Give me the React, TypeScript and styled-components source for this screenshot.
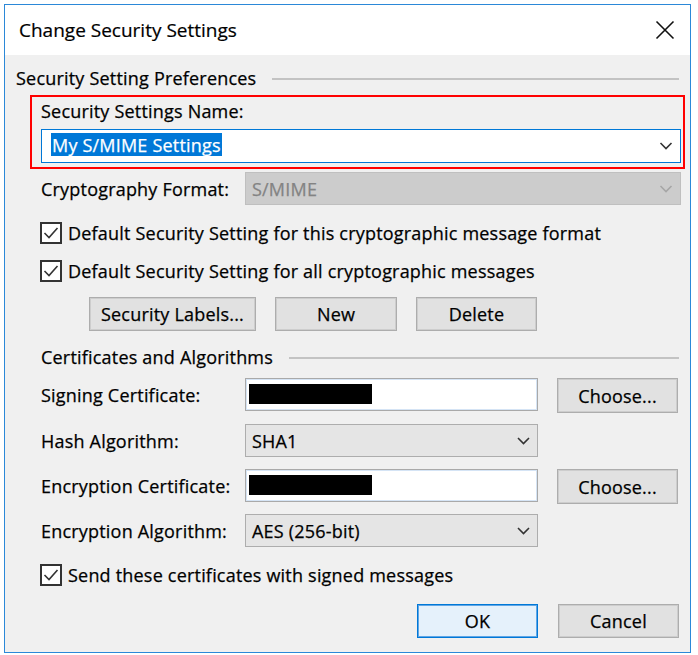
import React from "react";
import styled, { createGlobalStyle } from "styled-components";

const GlobalStyle = createGlobalStyle`
  html, body { margin: 0; padding: 0; background: #ffffff; }
  body { font-family: "Open Sans", "Noto Sans", sans-serif; color: #000; }
  * { box-sizing: border-box; }
`;

const Page = styled.div`
  width: 698px;
  height: 655px;
  padding: 4px 0 0 4px;
`;

const Window = styled.div`
  width: 687px;
  height: 649px;
  border: 1px solid #2b88d8;
  background: #f0f0f0;
  display: flex;
  flex-direction: column;
`;

const TitleBar = styled.div`
  height: 50px;
  flex: none;
  background: #ffffff;
  display: flex;
  align-items: center;
  justify-content: space-between;
  padding: 0 15px 0 14px;
`;

const Title = styled.span`
  font-size: 19px;
  letter-spacing: 0;
  color: #000;
  -webkit-text-stroke: 0.2px #000;
`;

const Body = styled.div`
  flex: 1;
  padding: 12px 11px 0 11px;
  display: flex;
  flex-direction: column;
  font-size: 18px;
  letter-spacing: 0.2px;
  color: #000;
  -webkit-text-stroke: 0.25px currentColor;
`;

const SectionHeader = styled.div<{ $indent?: number; $mt?: number }>`
  height: 22px;
  margin-top: ${(p) => p.$mt ?? 0}px;
  padding-left: ${(p) => p.$indent ?? 0}px;
  display: flex;
  align-items: center;
  gap: 16px;
  white-space: nowrap;
`;

const Rule = styled.div`
  flex: 1;
  height: 2px;
  background: #c3c3c3;
  margin-top: 2px;
`;

const Highlight = styled.div`
  margin: 6px -6px 0 14px;
  border: 2px solid #ff0000;
  padding: 3px 2px 4px 9px;
`;

const Label = styled.div`
  height: 22px;
  display: flex;
  align-items: center;
  white-space: nowrap;
`;

const NameInput = styled.div`
  margin-top: 7px;
  height: 34px;
  border: 1px solid #0078d7;
  background: #fff;
  display: flex;
  align-items: center;
  justify-content: space-between;
  padding: 0 7px 0 9px;
`;

const Selected = styled.span`
  background: #0078d7;
  color: #fff;
  height: 23px;
  display: flex;
  align-items: center;
  padding: 0 1px;
  margin-top: -3px;
`;

const Indent = styled.div`
  padding-left: 25px;
  display: flex;
  flex-direction: column;
`;

const FieldRow = styled.div<{ $mt: number; $h: number }>`
  margin-top: ${(p) => p.$mt}px;
  height: ${(p) => p.$h}px;
  display: flex;
  align-items: flex-start;
`;

const FieldLabel = styled.div<{ $h: number }>`
  width: 204px;
  flex: none;
  height: ${(p) => p.$h}px;
  display: flex;
  align-items: center;
  white-space: nowrap;
`;

const Dropdown = styled.div<{ $w?: number; $disabled?: boolean; $h: number }>`
  width: ${(p) => (p.$w ? `${p.$w}px` : "auto")};
  flex: ${(p) => (p.$w ? "none" : "1")};
  margin-right: ${(p) => (p.$w ? 0 : -2)}px;
  height: ${(p) => p.$h}px;
  background: ${(p) => (p.$disabled ? "#cccccc" : "#e5e5e5")};
  border: 1px solid ${(p) => (p.$disabled ? "#bfbfbf" : "#adadad")};
  color: ${(p) => (p.$disabled ? "#838383" : "#000")};
  display: flex;
  align-items: center;
  justify-content: space-between;
  padding: 0 7px 0 6px;
`;

const TextBox = styled.div`
  width: 293px;
  height: 33px;
  flex: none;
  background: #fff;
  border: 1px solid #a9a9a9;
  box-shadow: inset 0 0 0 1px #d5e4f5;
  padding: 5px 3px;
  display: flex;
`;

const Redacted = styled.div`
  width: 123px;
  height: 20px;
  background: #000;
`;

const Button = styled.div<{ $w: number; $primary?: boolean; $h?: number; $ml?: number }>`
  width: ${(p) => p.$w}px;
  height: ${(p) => p.$h ?? 34}px;
  margin-left: ${(p) => p.$ml ?? 0}px;
  flex: none;
  background: ${(p) => (p.$primary ? "#e5f1fb" : "#e1e1e1")};
  border: 1px solid ${(p) => (p.$primary ? "#0078d7" : "#adadad")};
  box-shadow: inset 0 0 0 1px ${(p) => (p.$primary ? "#5fa6e6" : "#cdcdcd")};
  display: flex;
  align-items: center;
  justify-content: center;
  white-space: nowrap;
`;

const ButtonRow = styled.div<{ $mt: number; $left?: number }>`
  margin-top: ${(p) => p.$mt}px;
  padding-left: ${(p) => p.$left ?? 0}px;
  display: flex;
  gap: 19px;
`;

const FooterRow = styled.div`
  margin-top: 18px;
  display: flex;
  justify-content: flex-end;
  gap: 20px;
`;

const CheckRow = styled.div<{ $mt: number }>`
  margin-top: ${(p) => p.$mt}px;
  height: 22px;
  display: flex;
  align-items: center;
  gap: 6px;
  margin-left: -1px;
  white-space: nowrap;
`;

const Box = styled.span`
  width: 22px;
  height: 22px;
  border: 2px solid #333333;
  background: #ffffff;
  display: flex;
  align-items: center;
  justify-content: center;
  flex: none;
`;

const Chevron = ({ w = 13, color = "#333" }: { w?: number; color?: string }) => (
  <svg width={w} height={8} viewBox="0 0 13 8">
    <path d="M1 1 L6.5 6.5 L12 1" fill="none" stroke={color} strokeWidth="1.6" />
  </svg>
);

const Check = () => (
  <svg width="16" height="14" viewBox="0 0 16 14">
    <path d="M1.5 7 L6 11.5 L14.5 2" fill="none" stroke="#333" strokeWidth="1.6" />
  </svg>
);

const CloseIcon = () => (
  <svg width="20" height="20" viewBox="0 0 20 20">
    <path d="M1.5 1.5 L18.5 18.5 M18.5 1.5 L1.5 18.5" stroke="#111" strokeWidth="1.6" />
  </svg>
);

const CheckItem = ({ mt, children }: { mt: number; children: React.ReactNode }) => (
  <CheckRow $mt={mt}>
    <Box>
      <Check />
    </Box>
    {children}
  </CheckRow>
);

export default function App() {
  return (
    <>
      <GlobalStyle />
      <Page>
        <Window>
          <TitleBar>
            <Title>Change Security Settings</Title>
            <CloseIcon />
          </TitleBar>
          <Body>
            <SectionHeader>
              Security Setting Preferences
              <Rule />
            </SectionHeader>
            <Highlight>
              <Label>Security Settings Name:</Label>
              <NameInput>
                <Selected>My S/MIME Settings</Selected>
                <Chevron w={14} />
              </NameInput>
            </Highlight>
            <Indent>
              <FieldRow $mt={3} $h={33}>
                <FieldLabel $h={33}>Cryptography Format:</FieldLabel>
                <Dropdown $disabled $h={33}>
                  S/MIME
                  <Chevron w={14} color="#a6a6a6" />
                </Dropdown>
              </FieldRow>
              <CheckItem mt={17}>Default Security Setting for this cryptographic message format</CheckItem>
              <CheckItem mt={16}>Default Security Setting for all cryptographic messages</CheckItem>
              <ButtonRow $mt={15} $left={48}>
                <Button $w={167}>Security Labels...</Button>
                <Button $w={122}>New</Button>
                <Button $w={121}>Delete</Button>
              </ButtonRow>
            </Indent>
            <SectionHeader $indent={25} $mt={15}>
              Certificates and Algorithms
              <Rule />
            </SectionHeader>
            <Indent>
              <FieldRow $mt={10} $h={35}>
                <FieldLabel $h={33}>Signing Certificate:</FieldLabel>
                <TextBox>
                  <Redacted />
                </TextBox>
                <Button $w={121} $h={35} $ml={19}>
                  Choose...
                </Button>
              </FieldRow>
              <FieldRow $mt={11} $h={33}>
                <FieldLabel $h={33}>Hash Algorithm:</FieldLabel>
                <Dropdown $w={293} $h={33}>
                  SHA1
                  <Chevron />
                </Dropdown>
              </FieldRow>
              <FieldRow $mt={12} $h={35}>
                <FieldLabel $h={33}>Encryption Certificate:</FieldLabel>
                <TextBox>
                  <Redacted />
                </TextBox>
                <Button $w={121} $h={35} $ml={19}>
                  Choose...
                </Button>
              </FieldRow>
              <FieldRow $mt={10} $h={33}>
                <FieldLabel $h={33}>Encryption Algorithm:</FieldLabel>
                <Dropdown $w={293} $h={33}>
                  AES (256-bit)
                  <Chevron />
                </Dropdown>
              </FieldRow>
              <CheckItem mt={17}>Send these certificates with signed messages</CheckItem>
              <FooterRow>
                <Button $w={121} $primary>
                  OK
                </Button>
                <Button $w={121}>Cancel</Button>
              </FooterRow>
            </Indent>
          </Body>
        </Window>
      </Page>
    </>
  );
}
